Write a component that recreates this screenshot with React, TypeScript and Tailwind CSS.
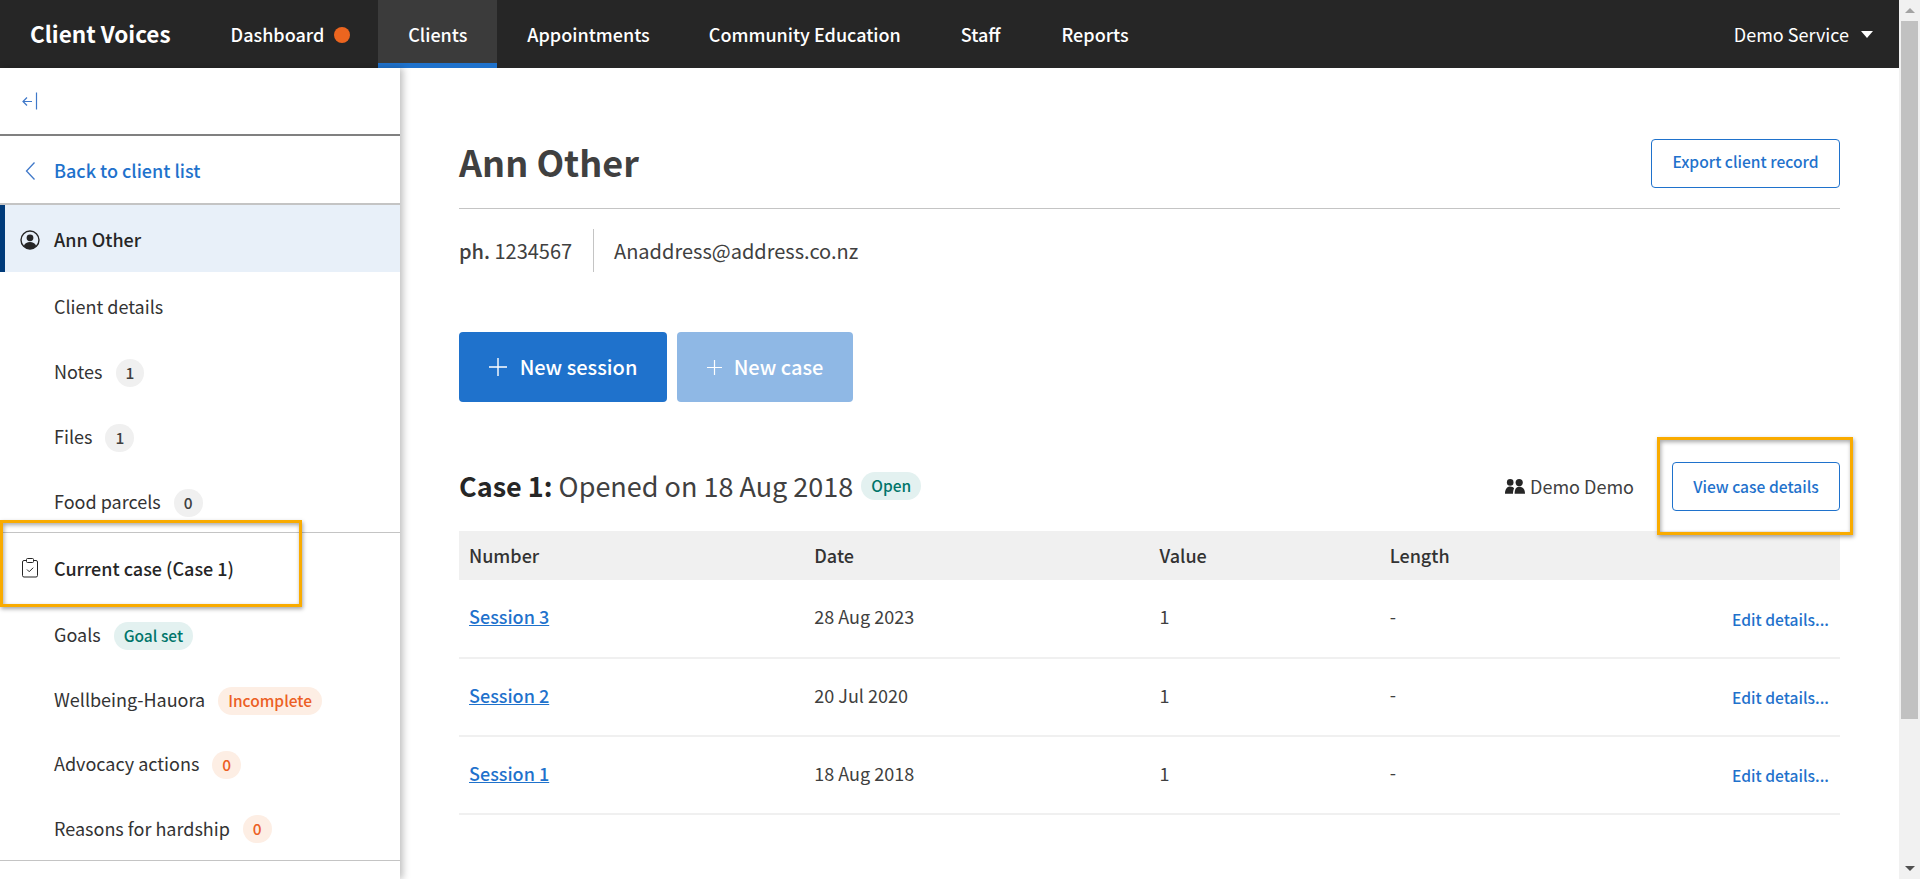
import React from "react";

const font = "font-['Noto_Sans_CJK_SC','Source_Sans_Pro','Noto_Sans',sans-serif]";

const navItems = [
  { label: "Appointments", className: "ml-[30px]" },
  { label: "Community Education", className: "ml-[59px]" },
  { label: "Staff", className: "ml-[60px]" },
  { label: "Reports", className: "ml-[61px]" },
];

const sessions = [
  { name: "Session 3", date: "28 Aug 2023" },
  { name: "Session 2", date: "20 Jul 2020" },
  { name: "Session 1", date: "18 Aug 2018" },
];

const Pill: React.FC<{ tone: "gray" | "teal" | "orange"; children: React.ReactNode }> = ({ tone, children }) => {
  const tones = {
    gray: "bg-[#f0f0f0] text-[#404040]",
    teal: "bg-[#e3f1f0] text-[#00756a]",
    orange: "bg-[#fdeee4] text-[#ec5f24]",
  };
  return (
    <span className={`ml-[13px] mt-[2px] inline-flex h-[28px] min-w-[28px] items-center justify-center rounded-full px-[10px] text-[15.5px] font-medium ${tones[tone]}`}>
      {children}
    </span>
  );
};

const SideRow: React.FC<{ children: React.ReactNode; className?: string }> = ({ children, className }) => (
  <div className={`flex items-center pl-[54px] text-[18px] text-[#333333] ${className ?? "h-[65px] pt-[4px]"}`}>{children}</div>
);

const App: React.FC = () => {
  return (
    <div className={`flex h-[879px] w-full overflow-hidden bg-white ${font}`}>
      <div className="relative flex min-w-0 flex-1 flex-col">
        <header className="flex h-[68px] shrink-0 items-center bg-[#262626] pr-[26px] text-[18px] font-medium text-white">
          <span className="ml-[30px] text-[22.5px] font-bold">Client Voices</span>
          <span className="ml-[60px]">Dashboard</span>
          <span className="ml-[10px] mt-[2px] h-[16px] w-[16px] rounded-full bg-[#ec651f]" />
          <span className="ml-[28px] flex h-full w-[119px] items-center justify-center border-b-[5px] border-[#1f72cc] bg-[#3b3b3b] pt-[5px] pb-0">
            Clients
          </span>
          {navItems.map((item) => (
            <span key={item.label} className={item.className}>
              {item.label}
            </span>
          ))}
          <span className="ml-auto font-normal">Demo Service</span>
          <span className="ml-[12px] h-0 w-0 border-x-[6px] border-t-[7px] border-x-transparent border-t-white" />
        </header>

        <div className="flex min-h-0 flex-1">
          <aside className="relative z-10 w-[400px] shrink-0 bg-white shadow-[3px_0_7px_rgba(0,0,0,0.25)]">
            <div className="flex h-[68px] items-center border-b-2 border-[#808080] pl-[22px]">
              <svg width="16" height="20" viewBox="0 0 16 20" fill="none" stroke="#3f78c9" strokeWidth="1.2">
                <path d="M1 10.5h9M5 6.5l-4 4 4 4" />
                <path d="M14.5 1.5v17" />
              </svg>
            </div>
            <div className="flex h-[69px] items-center border-b-2 border-[#c4c4c4] pt-[2px] pl-[25px] text-[18px] font-medium text-[#1f72cc]">
              <svg width="11" height="20" viewBox="0 0 11 20" fill="none" stroke="#3f78c9" strokeWidth="1.3">
                <path d="M9.5 1.5L1.5 10l8 8.5" />
              </svg>
              <span className="ml-[18px]">Back to client list</span>
            </div>
            <div className="flex h-[67px] items-center border-l-[5px] border-[#003b7a] bg-[#e8f0f9] pt-[2px] pl-[15px] text-[18px] font-medium text-[#262626]">
              <svg width="20" height="20" viewBox="0 0 20 20" fill="none">
                <circle cx="10" cy="10" r="9" stroke="#262626" strokeWidth="1.4" />
                <circle cx="10" cy="7.8" r="3.4" fill="#262626" />
                <path d="M3.8 16c1.2-3 3.4-4 6.2-4s5 1 6.2 4c-1.6 1.8-3.8 3-6.2 3s-4.6-1.2-6.2-3z" fill="#262626" />
              </svg>
              <span className="ml-[14px]">Ann Other</span>
            </div>
            <SideRow>Client details</SideRow>
            <SideRow>
              Notes<Pill tone="gray">1</Pill>
            </SideRow>
            <SideRow>
              Files<Pill tone="gray">1</Pill>
            </SideRow>
            <SideRow className="h-[66px] border-b border-[#c4c4c4] pt-[4px]">
              Food parcels<Pill tone="gray">0</Pill>
            </SideRow>
            <div className="flex h-[68px] items-center pt-[2px] pl-[21px] text-[18px] font-medium text-[#262626]">
              <svg width="18" height="20" viewBox="0 0 18 20" fill="none" stroke="#262626" strokeWidth="1">
                <path d="M5.5 2.5H3a1.5 1.5 0 0 0-1.5 1.5v13.5A1.5 1.5 0 0 0 3 19h12a1.5 1.5 0 0 0 1.5-1.5V4A1.5 1.5 0 0 0 15 2.5h-2.5" />
                <rect x="5.5" y="0.5" width="7" height="4" rx="1" />
                <path d="M6 11.5l2.2 2.2 4-4" />
              </svg>
              <span className="ml-[15px]">Current case (Case 1)</span>
            </div>
            <SideRow className="h-[65px] pt-[2px]">
              Goals<Pill tone="teal">Goal set</Pill>
            </SideRow>
            <SideRow className="h-[65px] pt-[2px]">
              Wellbeing-Hauora<Pill tone="orange">Incomplete</Pill>
            </SideRow>
            <SideRow className="h-[65px]">
              Advocacy actions<Pill tone="orange">0</Pill>
            </SideRow>
            <SideRow className="h-[65px] border-b border-[#c4c4c4]">
              Reasons for hardship<Pill tone="orange">0</Pill>
            </SideRow>
          </aside>

          <main className="min-w-0 flex-1 pl-[59px] pr-[59px] text-[#404040]">
            <div className="flex h-[141px] items-end justify-between border-b border-[#c4c4c4] pb-[20px]">
              <h1 className="mb-[2px] text-[36px] leading-[49px] font-bold">Ann Other</h1>
              <button className="h-[49px] w-[189px] rounded-[4px] border border-[#1f72cc] pb-[3px] text-[15.6px] font-medium text-[#1f72cc]">
                Export client record
              </button>
            </div>
            <div className="mt-[20px] flex h-[43px] items-center text-[20px]">
              <span className="w-[135px] border-r border-[#c4c4c4] leading-[43px]">
                <b className="font-medium">ph.</b> 1234567
              </span>
              <span className="ml-[20px]">Anaddress@address.co.nz</span>
            </div>
            <div className="mt-[60px] flex gap-[10px]">
              <button className="flex h-[70px] w-[208px] items-center justify-center gap-[13px] rounded-[4px] bg-[#1f72cc] text-[20px] font-medium text-white">
                <svg width="18" height="18" viewBox="0 0 18 18" stroke="currentColor" strokeWidth="1.4">
                  <path d="M9 0v18M0 9h18" />
                </svg>
                New session
              </button>
              <button className="flex h-[70px] w-[176px] items-center justify-center gap-[12px] rounded-[4px] bg-[#8fb8e5] text-[20px] font-medium text-white">
                <svg width="15" height="15" viewBox="0 0 15 15" stroke="currentColor" strokeWidth="1.2">
                  <path d="M7.5 0v15M0 7.5h15" />
                </svg>
                New case
              </button>
            </div>
            <div className="mt-[60px] flex h-[49px] items-center">
              <h2 className="text-[27px] font-normal">
                <b className="font-bold text-[#262626]">Case 1:</b> Opened on 18 Aug 2018
              </h2>
              <span className="ml-[8px] mb-[2px] flex h-[28px] w-[60px] items-center justify-center rounded-full bg-[#e3f1f0] text-[15.5px] font-medium text-[#00756a]">
                Open
              </span>
              <span className="ml-auto flex items-center text-[18px]">
                <svg className="mr-[5px] mb-[1px]" width="20" height="15" viewBox="0 0 20 15" fill="#262626">
                  <circle cx="5.2" cy="3.4" r="3.3" />
                  <circle cx="14.2" cy="3.6" r="3.6" />
                  <path d="M0 14.8C0 10.2 2 7.6 5.2 7.6c1.8 0 3.1.7 3.9 1.9-.8 1.4-1.1 3.2-1.1 5.3z" />
                  <path d="M9.6 14.8c0-4.6 1.6-7 4.6-7 3.6 0 5.8 2.6 5.8 7z" />
                </svg>
                Demo Demo
              </span>
              <button className="ml-[38px] h-[49px] w-[168px] rounded-[4px] border border-[#1f72cc] text-[15.6px] font-medium text-[#1f72cc]">
                View case details
              </button>
            </div>
            <table className="mt-[20px] w-full table-fixed text-left text-[18px]">
              <thead>
                <tr className="h-[49px] bg-[#f0f0f0] text-[#333333]">
                  <th className="w-1/4 pl-[10px] font-medium">Number</th>
                  <th className="w-1/4 pl-[10px] font-medium">Date</th>
                  <th className="w-1/6 pl-[10px] font-medium">Value</th>
                  <th className="w-1/3 pl-[10px] font-medium">Length</th>
                </tr>
              </thead>
              <tbody>
                {sessions.map((s) => (
                  <tr key={s.name} className="h-[78px] border-b-2 border-[#f0f0f0]">
                    <td className="pb-[4px] pl-[10px] font-medium text-[#1f72cc] underline">{s.name}</td>
                    <td className="pb-[4px] pl-[10px]">{s.date}</td>
                    <td className="pb-[4px] pl-[10px]">1</td>
                    <td className="pr-[11px] pb-[4px] pl-[10px]">
                      <div className="flex items-center justify-between">
                        <span>-</span>
                        <span className="mt-[6px] text-[15.6px] font-medium text-[#1f72cc]">Edit details...</span>
                      </div>
                    </td>
                  </tr>
                ))}
              </tbody>
            </table>
          </main>
        </div>

        {/* annotation boxes drawn over the screenshot */}
        <div className="pointer-events-none absolute top-[520px] left-0 z-20 h-[87px] w-[302px] border-[3px] border-[#f9ab00] shadow-[1px_2px_4px_rgba(0,0,0,0.35),inset_1px_2px_4px_rgba(0,0,0,0.35)]" />
        <div className="pointer-events-none absolute top-[437px] left-[1657px] z-20 h-[98px] w-[196px] border-[3px] border-[#f9ab00] shadow-[1px_2px_4px_rgba(0,0,0,0.35),inset_1px_2px_4px_rgba(0,0,0,0.35)]" />
      </div>

      {/* page scrollbar */}
      <div className="flex w-[21px] shrink-0 flex-col items-center bg-[#f1f1f1]">
        <div className="flex h-[21px] items-center justify-center">
          <span className="h-0 w-0 border-x-[5px] border-b-[5px] border-x-transparent border-b-[#a3a3a3]" />
        </div>
        <div className="h-[698px] w-[17px] bg-[#c1c1c1]" />
        <div className="mt-auto flex h-[21px] items-center justify-center">
          <span className="h-0 w-0 border-x-[5px] border-t-[5px] border-x-transparent border-t-[#505050]" />
        </div>
      </div>
    </div>
  );
};

export default App;
